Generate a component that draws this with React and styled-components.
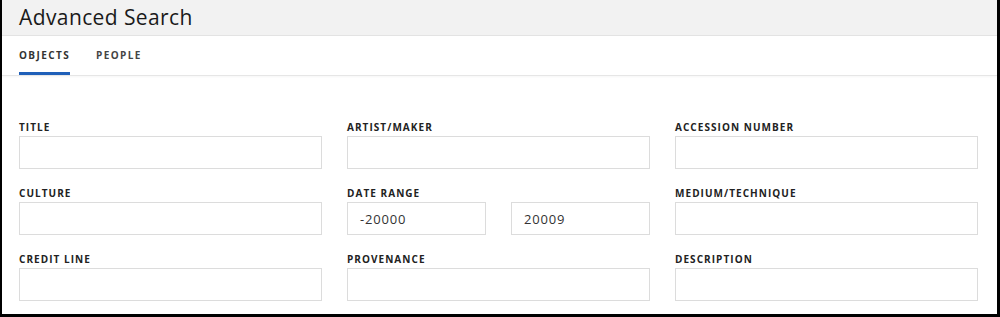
import React from "react";
import styled, { createGlobalStyle } from "styled-components";

const Global = createGlobalStyle`
  html, body { margin: 0; padding: 0; background: #fff; }
  * { box-sizing: border-box; }
`;

const Frame = styled.div`
  width: 1000px;
  height: 317px;
  border-left: 2px solid #000;
  border-right: 3px solid #000;
  border-bottom: 3px solid #000;
  background: #fff;
  display: flex;
  flex-direction: column;
  overflow: hidden;
`;

const Header = styled.div`
  height: 36px;
  background: #f2f2f2;
  border-bottom: 1px solid #e3e3e3;
  display: flex;
  align-items: center;
  padding: 0 17px 1px;
`;

const Title = styled.h1`
  margin: 0;
  font-family: "Open Sans", sans-serif;
  font-weight: 400;
  font-size: 21px;
  letter-spacing: 0.4px;
  color: #1a1a1a;
`;

const Tabs = styled.nav`
  height: 40px;
  display: flex;
  gap: 26px;
  padding: 0 17px;
  border-bottom: 1px solid #e6e6e6;
  box-shadow: 0 1px 2px rgba(0, 0, 0, 0.04);
`;

const Tab = styled.div`
  display: flex;
  align-items: center;
  padding-top: 1px;
  font-family: "Open Sans", sans-serif;
  font-weight: 700;
  font-size: 10px;
  letter-spacing: 1.4px;
  color: ${(p) => (p.$active ? "#333" : "#444")};
  border-bottom: 3px solid ${(p) => (p.$active ? "#1f5fb8" : "transparent")};
`;

const Form = styled.div`
  display: grid;
  grid-template-columns: repeat(3, 303px);
  column-gap: 25px;
  row-gap: 18px;
  padding: 45px 19px 0 17px;
`;

const Field = styled.div`
  display: flex;
  flex-direction: column;
`;

const Label = styled.label`
  font-family: "Open Sans", sans-serif;
  font-weight: 700;
  font-size: 10px;
  letter-spacing: 1.05px;
  line-height: 12px;
  color: #222;
  margin-bottom: 3px;
`;

const Pair = styled.div`
  display: grid;
  grid-template-columns: 1fr 1fr;
  column-gap: 25px;
`;

const Input = styled.div`
  height: 33px;
  border: 1.5px solid #dcdcdc;
  background: #fff;
  display: flex;
  align-items: center;
  padding: 0 12px;
  font-family: "Open Sans", sans-serif;
  font-size: 13px;
  letter-spacing: 0.8px;
  color: #333;
`;

const fields = [
  { label: "TITLE" },
  { label: "ARTIST/MAKER" },
  { label: "ACCESSION NUMBER" },
  { label: "CULTURE" },
  { label: "DATE RANGE", range: ["-20000", "20009"] },
  { label: "MEDIUM/TECHNIQUE" },
  { label: "CREDIT LINE" },
  { label: "PROVENANCE" },
  { label: "DESCRIPTION" },
];

export default function App() {
  return (
    <>
      <Global />
      <Frame>
        <Header>
          <Title>Advanced Search</Title>
        </Header>
        <Tabs>
          <Tab $active>OBJECTS</Tab>
          <Tab>PEOPLE</Tab>
        </Tabs>
        <Form>
          {fields.map((f) => (
            <Field key={f.label}>
              <Label>{f.label}</Label>
              {f.range ? (
                <Pair>
                  <Input>{f.range[0]}</Input>
                  <Input>{f.range[1]}</Input>
                </Pair>
              ) : (
                <Input />
              )}
            </Field>
          ))}
        </Form>
      </Frame>
    </>
  );
}
